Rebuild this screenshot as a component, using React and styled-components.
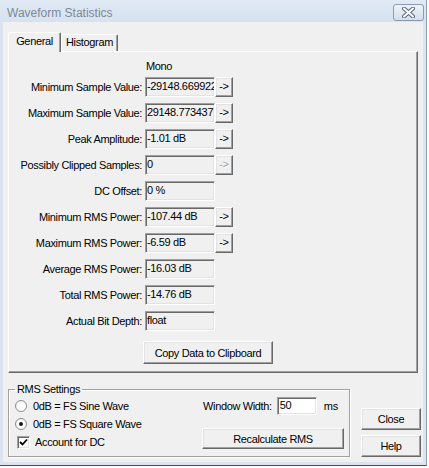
import React from "react";
import styled, { createGlobalStyle } from "styled-components";

const GlobalStyle = createGlobalStyle`
  html, body {
    margin: 0;
    padding: 0;
    background: #fff;
  }
  body {
    font-family: "Liberation Sans", Arial, sans-serif;
    font-size: 11px;
    letter-spacing: -0.35px;
    color: #000;
  }
  * {
    box-sizing: border-box;
  }
`;

const Window = styled.div`
  width: 427px;
  height: 466px;
  display: flex;
  flex-direction: column;
  background: #dbe5f1;
  border-right: 1px solid #8e9cad;
  border-bottom: 1px solid #4d4d4d;
`;

const TitleBar = styled.div`
  height: 22px;
  flex: none;
  display: flex;
  justify-content: space-between;
  align-items: flex-start;
  padding: 0 2px 0 7px;
  background: linear-gradient(to bottom, #e1eaf5, #d6e2f0);
`;

const Title = styled.span`
  font-size: 12px;
  letter-spacing: 0;
  line-height: 12px;
  margin-top: 7px;
  color: #7d8895;
`;

const CloseX = styled.div`
  width: 31px;
  height: 17px;
  margin-top: 4px;
  border: 1px solid #8c9bb1;
  border-radius: 3px;
  background: linear-gradient(to bottom, #eef3f9, #d4deec);
  display: flex;
  align-items: center;
  justify-content: center;
`;

const Client = styled.div`
  height: 440px;
  flex: none;
  margin: 0 3px;
  background: #f0f0f0;
  padding: 10px 2px 4px 5px;
  display: flex;
  flex-direction: column;
`;

const TabStrip = styled.div`
  height: 19px;
  display: flex;
  align-items: flex-end;
`;

const Tab = styled.div`
  position: relative;
  z-index: ${(p) => (p.$active ? 1 : 0)};
  width: ${(p) => p.$w}px;
  height: ${(p) => (p.$active ? 20 : 17)}px;
  margin-bottom: ${(p) => (p.$active ? -1 : 0)}px;
  background: #f0f0f0;
  border: 1px solid;
  border-bottom: none;
  border-color: #fff #696969 transparent #fff;
  box-shadow: inset -1px 0 0 #a0a0a0;
  border-radius: 2px 2px 0 0;
  text-align: center;
  line-height: ${(p) => (p.$active ? 16 : 15)}px;
`;

const Panel = styled.div`
  width: 410px;
  height: 322px;
  border: 1px solid;
  border-color: #fff #696969 #696969 #fff;
  box-shadow: inset -1px -1px 0 #a0a0a0;
  padding-top: 9px;
`;

const StatsGrid = styled.div`
  display: grid;
  grid-template-columns: 136px 70px 18px;
  grid-template-rows: 10px;
  grid-auto-rows: 20px;
  row-gap: 6px;
`;

const ColumnHead = styled.div`
  grid-column: 2;
  line-height: 10px;
  padding-left: 1px;
`;

const Label = styled.div`
  grid-column: 1;
  text-align: right;
  padding-right: 3px;
  white-space: nowrap;
  line-height: 20px;
`;

const Field = styled.div`
  grid-column: 2;
  height: 20px;
  background: ${(p) => (p.$editable ? "#fff" : "#f0f0f0")};
  border: 1px solid;
  border-color: #a0a0a0 #fff #fff #a0a0a0;
  box-shadow: inset 1px 1px 0 #696969, inset -1px -1px 0 #e3e3e3;
  padding-left: 1px;
  line-height: 16px;
  white-space: nowrap;
  overflow: hidden;
`;

const Button = styled.div`
  width: ${(p) => p.$w || "auto"};
  height: ${(p) => p.$h || 22}px;
  background: #f0f0f0;
  border: 1px solid;
  border-color: #fff #696969 #696969 #fff;
  box-shadow: inset -1px -1px 0 #a0a0a0, inset 1px 1px 0 #e3e3e3;
  display: flex;
  align-items: center;
  justify-content: center;
  color: ${(p) => (p.$disabled ? "#a0a0a0" : "#000")};
  text-shadow: ${(p) => (p.$disabled ? "1px 1px 0 #fff" : "none")};
  white-space: nowrap;
`;

const ArrowButton = styled(Button)`
  grid-column: 3;
  padding-bottom: 2px;
`;

const CopyRow = styled.div`
  margin-top: 10px;
  padding-left: 134px;
`;

const BottomArea = styled.div`
  margin-top: 10px;
  display: flex;
  align-items: flex-end;
  gap: 11px;
`;

const GroupBox = styled.fieldset`
  width: 342px;
  margin: 0;
  padding: 0 5px 5px 6px;
  border: 1px solid #a0a0a0;
  box-shadow: 1px 1px 0 #fff, inset 1px 1px 0 #fff;
  display: flex;
  justify-content: space-between;
  align-items: flex-start;
`;

const Legend = styled.legend`
  padding: 0 2px;
  line-height: 13px;
`;

const OptionColumn = styled.div`
  margin-top: 1px;
  display: flex;
  flex-direction: column;
`;

const OptionRow = styled.div`
  height: 18px;
  display: flex;
  align-items: center;
  gap: ${(p) => p.$gap}px;
  padding-left: ${(p) => p.$indent || 0}px;
`;

const RadioDot = styled.span`
  width: 12px;
  height: 12px;
  border-radius: 50%;
  border: 1px solid #8f8f8f;
  background: radial-gradient(circle at 60% 60%, #fff 40%, #e6e6e6 100%);
  display: flex;
  align-items: center;
  justify-content: center;
  &::after {
    content: "";
    width: 4px;
    height: 4px;
    border-radius: 50%;
    background: ${(p) => (p.$checked ? "#1a1a1a" : "transparent")};
  }
`;

const CheckBox = styled.span`
  width: 13px;
  height: 13px;
  background: #fff;
  border: 1px solid;
  border-color: #a0a0a0 #fff #fff #a0a0a0;
  box-shadow: inset 1px 1px 0 #696969, inset -1px -1px 0 #e3e3e3;
  display: flex;
  align-items: center;
  justify-content: center;
`;

const RmsColumn = styled.div`
  width: 142px;
  margin-top: 1px;
  display: flex;
  flex-direction: column;
  gap: 13px;
`;

const WidthRow = styled.div`
  height: 18px;
  display: flex;
  align-items: center;
  padding-left: 1px;
`;

const WidthInput = styled(Field)`
  width: 40px;
  height: 18px;
  margin-left: 5px;
  margin-right: 7px;
  padding-left: 2px;
  line-height: 15px;
`;

const SideButtons = styled.div`
  width: 60px;
  display: flex;
  flex-direction: column;
  gap: 5px;
`;

const stats = [
  { label: "Minimum Sample Value:", value: "-29148.669922", arrow: true },
  { label: "Maximum Sample Value:", value: "29148.773437", arrow: true },
  { label: "Peak Amplitude:", value: "-1.01 dB", arrow: true },
  { label: "Possibly Clipped Samples:", value: "0", arrow: true, disabled: true },
  { label: "DC Offset:", value: "0 %" },
  { label: "Minimum RMS Power:", value: "-107.44 dB", arrow: true },
  { label: "Maximum RMS Power:", value: "-6.59 dB", arrow: true },
  { label: "Average RMS Power:", value: "-16.03 dB" },
  { label: "Total RMS Power:", value: "-14.76 dB" },
  { label: "Actual Bit Depth:", value: "float" },
];

function CloseGlyph() {
  return (
    <svg width="13" height="11" viewBox="0 0 13 11">
      <path d="M2 1.5 L11 9.5 M11 1.5 L2 9.5" stroke="#5a6675" strokeWidth="4" strokeLinecap="round" />
      <path d="M2 1.5 L11 9.5 M11 1.5 L2 9.5" stroke="#fff" strokeWidth="2" strokeLinecap="round" />
    </svg>
  );
}

function CheckMark() {
  return (
    <svg width="9" height="9" viewBox="0 0 9 9">
      <path d="M1 4 L3.5 6.5 L8 1.5" fill="none" stroke="#000" strokeWidth="1.8" />
    </svg>
  );
}

export default function App() {
  return (
    <>
      <GlobalStyle />
      <Window>
        <TitleBar>
          <Title>Waveform Statistics</Title>
          <CloseX>
            <CloseGlyph />
          </CloseX>
        </TitleBar>
        <Client>
          <TabStrip>
            <Tab $active $w={53}>General</Tab>
            <Tab $w={57}>Histogram</Tab>
          </TabStrip>
          <Panel>
            <StatsGrid>
              <ColumnHead>Mono</ColumnHead>
              {stats.map((s) => (
                <React.Fragment key={s.label}>
                  <Label>{s.label}</Label>
                  <Field>{s.value}</Field>
                  {s.arrow && (
                    <ArrowButton $h={20} $disabled={s.disabled}>
                      -&gt;
                    </ArrowButton>
                  )}
                </React.Fragment>
              ))}
            </StatsGrid>
            <CopyRow>
              <Button $w="130px" $h={23}>Copy Data to Clipboard</Button>
            </CopyRow>
          </Panel>
          <BottomArea>
            <GroupBox>
              <Legend>RMS Settings</Legend>
              <OptionColumn>
                <OptionRow $gap={6}>
                  <RadioDot />
                  <span>0dB = FS Sine Wave</span>
                </OptionRow>
                <OptionRow $gap={6}>
                  <RadioDot $checked />
                  <span>0dB = FS Square Wave</span>
                </OptionRow>
                <OptionRow $gap={5} $indent={2}>
                  <CheckBox>
                    <CheckMark />
                  </CheckBox>
                  <span>Account for DC</span>
                </OptionRow>
              </OptionColumn>
              <RmsColumn>
                <WidthRow>
                  <span>Window Width:</span>
                  <WidthInput $editable>50</WidthInput>
                  <span>ms</span>
                </WidthRow>
                <Button $h={21}>Recalculate RMS</Button>
              </RmsColumn>
            </GroupBox>
            <SideButtons>
              <Button>Close</Button>
              <Button>Help</Button>
            </SideButtons>
          </BottomArea>
        </Client>
      </Window>
    </>
  );
}
